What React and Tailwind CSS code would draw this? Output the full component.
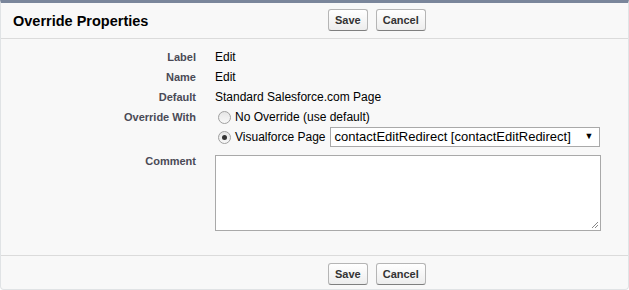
import React from 'react';

const Btn = ({ children }) => (
  <button className="h-[22px] px-[6px] rounded-[3px] border border-[#b5b5b5] border-b-[#7f7f7f] bg-gradient-to-b from-white to-[#ededed] text-[11px] font-bold text-[#333] leading-none">
    {children}
  </button>
);

const Row = ({ label, children, className = '' }) => (
  <div className={`flex ${className}`}>
    <div className="w-[195px] shrink-0 h-[20px] flex items-center justify-end text-[11px] font-bold text-[#4a4a56]">{label}</div>
    <div className="pl-[19px] text-[12px] text-black">{children}</div>
  </div>
);

const Radio = ({ checked }) => (
  <span className="inline-flex w-[13px] h-[13px] rounded-full border border-[#a0a0a0] bg-gradient-to-b from-[#e6e6e6] to-[#f8f8f8] items-center justify-center mr-[4px]">
    {checked && <span className="w-[5px] h-[5px] rounded-full bg-[#333]" />}
  </span>
);

export default function App() {
  return (
    <div className="w-[629px] h-[290px] font-['Liberation_Sans',Arial,sans-serif]">
      <div className="h-[290px] bg-[#f8f8f8] border border-[#e0e3e5] border-t-[3px] border-t-[#7a869b] rounded-b-[4px] flex flex-col">
        <div className="h-[36px] flex items-center border-b border-[#dbdbdb] relative">
          <div className="pl-[12px] text-[14.5px] font-bold text-black pt-[2px]">Override Properties</div>
          <div className="absolute left-[327px] top-[6px] flex gap-[8px]">
            <Btn>Save</Btn>
            <Btn>Cancel</Btn>
          </div>
        </div>

        <div className="flex-1 pt-[8px] flex flex-col">
          <Row label="Label"><div className="h-[20px] flex items-center">Edit</div></Row>
          <Row label="Name"><div className="h-[20px] flex items-center">Edit</div></Row>
          <Row label="Default"><div className="h-[20px] flex items-center">Standard Salesforce.com Page</div></Row>
          <Row label="Override With">
            <div className="flex flex-col">
              <div className="flex items-center h-[20px] pl-[3px]">
                <Radio />
                <span>No Override (use default)</span>
              </div>
              <div className="flex items-center h-[20px] pl-[3px]">
                <Radio checked />
                <span>Visualforce Page</span>
                <div className="ml-[4px] w-[270px] h-[20px] border border-[#a9a9a9] bg-white flex items-center pl-[4px] pr-[5px] text-[13px] text-black">
                  <span className="flex-1">contactEditRedirect [contactEditRedirect]</span>
                  <span className="text-[9px]">▼</span>
                </div>
              </div>
            </div>
          </Row>
          <Row label="Comment" className="mt-[4px]">
            <div className="mt-[4px] w-[386px] h-[76px] border border-[#a9a9a9] bg-white relative">
              <svg className="absolute right-[1px] bottom-[1px]" width="8" height="8" viewBox="0 0 8 8">
                <path d="M7 1 L1 7 M7 4 L4 7" stroke="#888" strokeWidth="1" />
              </svg>
            </div>
          </Row>
        </div>

        <div className="h-[34px] border-t border-[#dbdbdb] relative">
          <div className="absolute left-[327px] top-[7px] flex gap-[8px]">
            <Btn>Save</Btn>
            <Btn>Cancel</Btn>
          </div>
        </div>
      </div>
    </div>
  );
}
